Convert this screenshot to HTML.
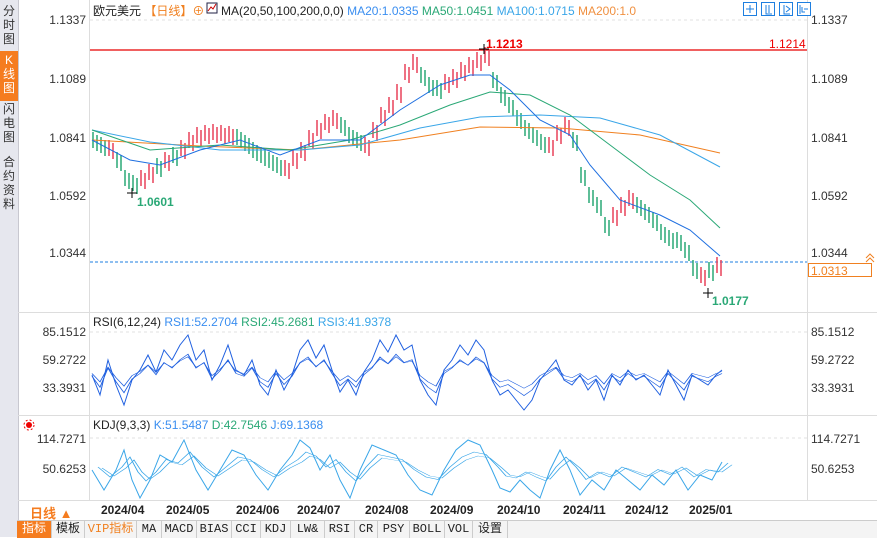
<!DOCTYPE html>
<html><head><meta charset="utf-8"><style>
body{margin:0;width:877px;height:537px;overflow:hidden;background:#fff;font-family:"Liberation Sans","Noto Sans CJK SC",sans-serif;font-size:12px;position:relative}
.a{position:absolute;white-space:nowrap}
.side{position:absolute;left:0;top:0;width:18px;height:537px;background:#e6e7ee;border-right:1px solid #c8c8d0}
.side div{position:absolute;left:0;width:18px;text-align:center;font-size:12px;line-height:14px;color:#333}
.tabs{position:absolute;left:17px;top:520px;height:17px;width:860px;background:#f4f4f4;border-top:1px solid #ccc;display:flex;font-size:12px;font-family:"Liberation Mono","Noto Sans CJK SC",monospace}
.tabs div{border-right:1px solid #ccc;line-height:17px;text-align:center;color:#222;box-sizing:border-box}
</style></head><body>
<div class="side">
<div style="top:4px">分<br>时<br>图</div>
<div style="top:51px;height:48px;background:#f57c1f;color:#fff;padding-top:2px">K<br>线<br>图</div>
<div style="top:102px">闪<br>电<br>图</div>
<div style="top:155px">合<br>约<br>资<br>料</div>
</div>
<svg class="a" style="left:0;top:0" width="877" height="537">
<g stroke="#e2e2e2" stroke-dasharray="3,3"><line x1="90" y1="20" x2="807" y2="20"/><line x1="90" y1="332" x2="807" y2="332"/><line x1="90" y1="438" x2="807" y2="438"/></g>
<line x1="89.5" y1="0" x2="89.5" y2="500" stroke="#ddd"/>
<line x1="807.5" y1="0" x2="807.5" y2="500" stroke="#ddd"/>
<line x1="18" y1="312.5" x2="877" y2="312.5" stroke="#ddd"/>
<line x1="18" y1="415.5" x2="877" y2="415.5" stroke="#ddd"/>
<line x1="18" y1="500.5" x2="877" y2="500.5" stroke="#ddd"/>
<line x1="90" y1="50" x2="807" y2="50" stroke="#e60000" stroke-width="1.2"/>
<line x1="90" y1="262" x2="807" y2="262" stroke="#1e7fe0" stroke-dasharray="3,2"/>
<g id="c" stroke-width="1.5">
<path stroke="#2aa876" d="M93 132V148M101 137V153M117 152V168M125 170V186M133 175V191M157 158V174M173 147V163M237 129V145M245 135V151M253 142V158M261 147V163M269 152V168M277 157V173M341 117V133M349 127V143M357 132V148M421 67V83M429 77V93M437 80V96M493 72V88M501 87V103M509 97V113M517 110V126M525 120V136M533 127V143M541 134V150M573 132V148M581 167V183M589 187V203M597 197V213M605 217V233M637 197V213M645 204V220M653 212V228M661 224V240M669 230V246M677 232V248M685 242V258M693 260V276M709 262V278"/>
<path stroke="#e8425a" d="M109 140V156M141 170V186M149 164V180M165 152V168M181 140V156M189 132V148M197 127V143M205 125V141M213 124V140M221 125V141M229 126V142M285 160V176M293 150V166M301 142V158M309 130V146M317 120V136M325 114V130M333 110V126M365 137V153M373 122V138M381 107V123M389 97V113M397 84V100M405 64V80M413 54V70M445 74V90M453 69V85M461 62V78M469 57V73M477 52V68M485 47V63M549 137V153M557 125V141M565 117V133M613 207V223M621 197V213M629 190V206M701 267V283M717 257V273"/>
</g>
<use href="#c" transform="translate(4,3)"/>
<g fill="none" stroke-width="1">
<polyline stroke="#f08020" points="92,140 200,146 300,150 400,140 480,127 560,128 640,135 720,153"/>
<polyline stroke="#3aa6e8" points="92,130 150,142 220,150 300,150 360,145 420,128 480,117 540,115 600,118 660,135 720,167"/>
<polyline stroke="#2aa876" points="92,130 150,150 220,145 290,150 350,140 400,125 450,105 490,92 530,95 570,115 610,145 650,175 690,200 720,228"/>
<polyline stroke="#1e6fe0" points="92,140 130,160 160,165 200,150 240,140 280,155 320,140 360,140 400,110 440,85 470,75 490,75 510,90 540,120 570,135 590,165 620,200 660,215 690,230 720,256"/>
</g>
<path d="M127 193h10M132 188v10M479 49h10M484 44v10M703 293h10M708 288v10" stroke="#000"/>
<g fill="none">
<polyline id="r" stroke="#2060e0" points="92,375 100,395 108,360 116,385 124,405 132,380 140,370 148,355 156,372 164,350 172,360 180,345 188,335 196,360 204,350 212,380 220,365 228,345 236,370 244,375 252,360 260,385 268,395 276,370 284,390 292,375 300,350 308,340 316,358 324,345 332,370 340,392 348,380 356,395 364,372 372,360 380,340 388,352 396,335 404,350 412,345 420,380 428,395 436,405 444,370 452,360 460,345 468,355 476,340 484,350 492,380 500,395 508,390 516,400 524,410 532,400 540,380 548,370 556,360 564,380 572,385 580,375 588,390 596,380 604,400 612,375 620,385 628,370 636,380 644,375 652,385 660,395 668,370 676,385 684,400 692,375 700,380 708,385 716,375 722,370"/>
<use href="#r" transform="translate(0,216) scale(1,0.42)" style="stroke:#3aa6e8"/>
<use href="#r" transform="translate(0,170) scale(1,0.55)" style="stroke:#2aa876"/>
<polyline id="k" stroke="#3aa6e8" points="92,470 104,490 116,470 124,450 132,480 140,498 150,480 160,455 172,462 184,440 196,470 208,490 220,470 232,450 244,455 256,475 268,490 280,470 292,455 300,440 310,448 320,470 330,455 340,480 350,498 360,470 372,445 384,450 396,455 408,475 420,490 432,495 444,470 456,450 468,440 480,445 492,470 500,488 510,492 520,480 530,490 540,498 550,470 560,450 570,470 580,495 592,480 604,490 616,470 628,480 640,490 652,475 664,485 676,470 688,490 700,475 712,480 722,462"/>
<use href="#k" transform="translate(6,232) scale(1,0.5)" style="stroke:#2060e0"/>
<use href="#k" transform="translate(10,280) scale(1,0.4)" style="stroke:#2aa876"/>
</g>
<rect x="808.5" y="263.5" width="63" height="13" fill="#fff" stroke="#f08020"/>
<path d="M866 258l4-4 4 4M866 262l4-4 4 4" stroke="#f08020" fill="none"/>
<g fill="#fff" stroke="#1e7fe0"><rect x="743.5" y="2.5" width="13" height="13"/><rect x="761.5" y="2.5" width="13" height="13"/><rect x="779.5" y="2.5" width="13" height="13"/><rect x="797.5" y="2.5" width="13" height="13"/></g>
<path d="M750 5v8M746 9h8M766 5v9h6M769 5v8M784 5v9h6M786 6l4 3-4 3M800 5v9M802 7v5h3M804 9h4" stroke="#1e7fe0" fill="none"/>
<circle cx="29" cy="425" r="3" fill="#e00"/><circle cx="29" cy="425" r="5" fill="none" stroke="#e00" stroke-dasharray="2,2"/>
<rect x="207" y="3" width="10" height="10" fill="#fff" stroke="#224"/><path d="M208 11l3-4 2 2 3-5" stroke="#c00" fill="none"/>
</svg>
<div class="a" style="left:93px;top:2px;color:#222">欧元美元 <span style="color:#f08020">【日线】⊕</span> &nbsp;&nbsp;&nbsp;&nbsp;MA(20,50,100,200,0,0) <span style="color:#3a8ef0">MA20:1.0335</span> <span style="color:#2aa876">MA50:1.0451</span> <span style="color:#3aa6e8">MA100:1.0715</span> <span style="color:#f09040">MA200:1.0</span></div>
<div class="a" style="left:93px;top:315px;color:#222">RSI(6,12,24) <span style="color:#3a8ef0">RSI1:52.2704</span> <span style="color:#2aa876">RSI2:45.2681</span> <span style="color:#3aa6e8">RSI3:41.9378</span></div>
<div class="a" style="left:93px;top:418px;color:#222">KDJ(9,3,3) <span style="color:#3a8ef0">K:51.5487</span> <span style="color:#2aa876">D:42.7546</span> <span style="color:#3a8ef0">J:69.1368</span></div>
<div class="a" style="right:791px;top:13px;color:#333">1.1337</div>
<div class="a" style="right:791px;top:72px;color:#333">1.1089</div>
<div class="a" style="right:791px;top:131px;color:#333">1.0841</div>
<div class="a" style="right:791px;top:189px;color:#333">1.0592</div>
<div class="a" style="right:791px;top:246px;color:#333">1.0344</div>
<div class="a" style="right:791px;top:325px;color:#333">85.1512</div>
<div class="a" style="right:791px;top:353px;color:#333">59.2722</div>
<div class="a" style="right:791px;top:381px;color:#333">33.3931</div>
<div class="a" style="right:791px;top:432px;color:#333">114.7271</div>
<div class="a" style="right:791px;top:462px;color:#333">50.6253</div>
<div class="a" style="left:811px;top:13px;color:#333">1.1337</div>
<div class="a" style="left:811px;top:72px;color:#333">1.1089</div>
<div class="a" style="left:811px;top:131px;color:#333">1.0841</div>
<div class="a" style="left:811px;top:189px;color:#333">1.0592</div>
<div class="a" style="left:811px;top:246px;color:#333">1.0344</div>
<div class="a" style="left:811px;top:264px;color:#f08020">1.0313</div>
<div class="a" style="left:811px;top:325px;color:#333">85.1512</div>
<div class="a" style="left:811px;top:353px;color:#333">59.2722</div>
<div class="a" style="left:811px;top:381px;color:#333">33.3931</div>
<div class="a" style="left:811px;top:432px;color:#333">114.7271</div>
<div class="a" style="left:811px;top:462px;color:#333">50.6253</div>
<div class="a" style="left:769px;top:37px;color:#e00">1.1214</div>
<div class="a" style="left:486px;top:37px;color:#e00;font-weight:bold">1.1213</div>
<div class="a" style="left:137px;top:195px;color:#2aa876;font-weight:bold">1.0601</div>
<div class="a" style="left:712px;top:294px;color:#2aa876;font-weight:bold">1.0177</div>
<div class="a" style="left:30px;top:503px;color:#f57c1f;font-size:13px;font-weight:bold">日线 ▲</div>
<div class="a" style="left:0;top:503px;width:877px;font-weight:bold;color:#222">
<span class="a" style="left:101px">2024/04</span><span class="a" style="left:166px">2024/05</span><span class="a" style="left:236px">2024/06</span><span class="a" style="left:297px">2024/07</span><span class="a" style="left:365px">2024/08</span><span class="a" style="left:430px">2024/09</span><span class="a" style="left:497px">2024/10</span><span class="a" style="left:563px">2024/11</span><span class="a" style="left:625px">2024/12</span><span class="a" style="left:689px">2025/01</span></div>
<div class="tabs">
<div style="width:35px;background:#f57c1f;color:#fff">指标</div><div style="width:33px">模板</div><div style="width:52px;color:#f08020">VIP指标</div><div style="width:25px">MA</div><div style="width:35px">MACD</div><div style="width:35px">BIAS</div><div style="width:29px">CCI</div><div style="width:30px">KDJ</div><div style="width:34px">LW&amp;</div><div style="width:30px">RSI</div><div style="width:23px">CR</div><div style="width:32px">PSY</div><div style="width:35px">BOLL</div><div style="width:28px">VOL</div><div style="width:35px">设置</div>
</div>
</body></html>
